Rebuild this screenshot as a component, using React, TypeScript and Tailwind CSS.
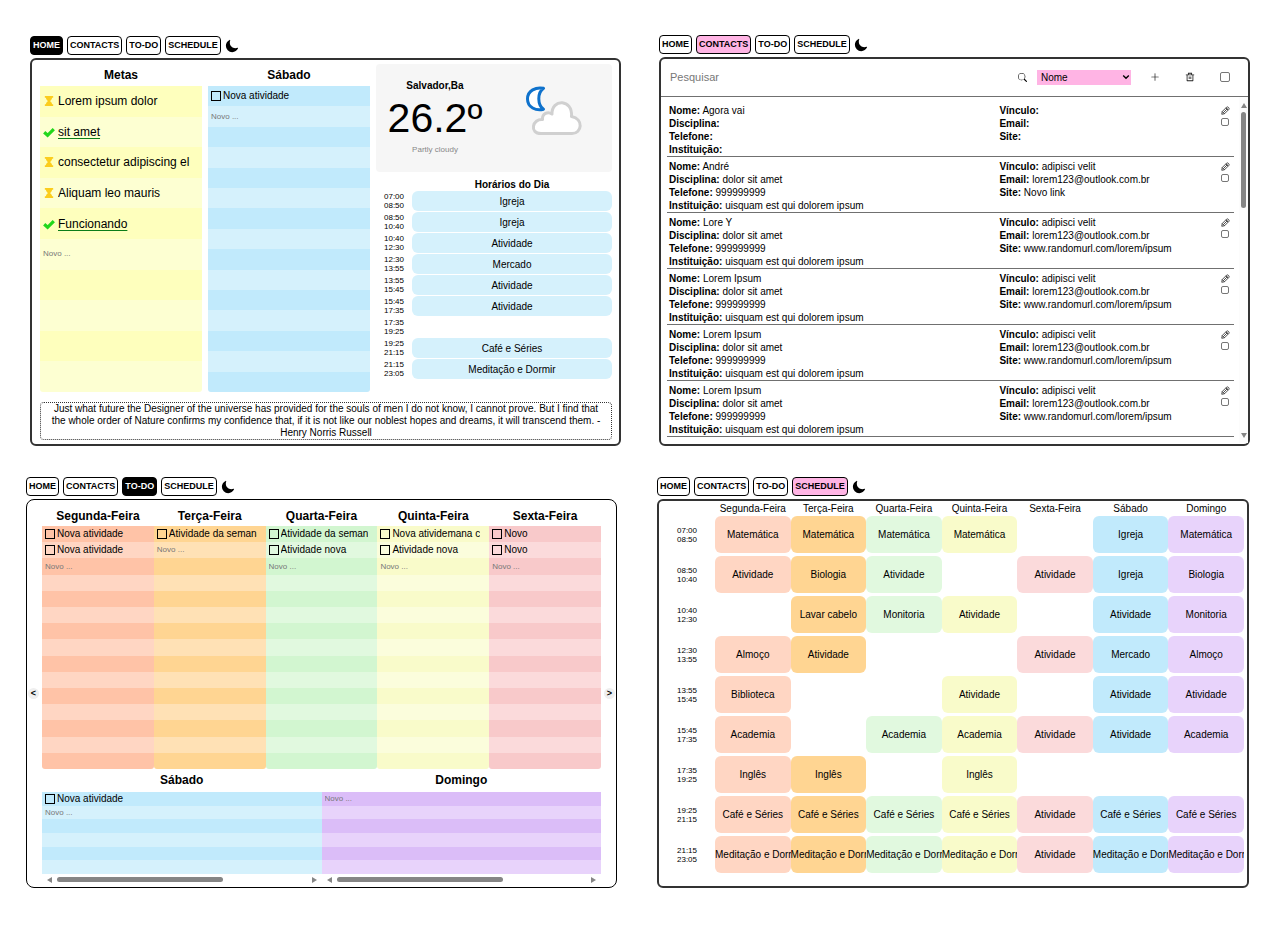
import type { ReactNode } from "react";
import { IoMoon } from "react-icons/io5";
import { BsSearch, BsPlusLg } from "react-icons/bs";
import { RiDeleteBinLine } from "react-icons/ri";

type Tint = { strong: string; soft: string };

const tints: Record<string, Tint> = {
  lemon: { strong: "bg-[#feffbd]", soft: "bg-[#fdffd2]" },
  blue: { strong: "bg-[#c1eafc]", soft: "bg-[#d5f1fc]" },
  salmon: { strong: "bg-[#ffc3a7]", soft: "bg-[#ffd6c3]" },
  amber: { strong: "bg-[#ffd592]", soft: "bg-[#ffe1b5]" },
  green: { strong: "bg-[#d2f6d0]", soft: "bg-[#e1f9df]" },
  yellow: { strong: "bg-[#f9fbca]", soft: "bg-[#fbfddc]" },
  pink: { strong: "bg-[#f8c9ca]", soft: "bg-[#fbdadb]" },
  purple: { strong: "bg-[#dbbdf8]", soft: "bg-[#e8d3fb]" },
};

const times = [
  ["07:00", "08:50"],
  ["08:50", "10:40"],
  ["10:40", "12:30"],
  ["12:30", "13:55"],
  ["13:55", "15:45"],
  ["15:45", "17:35"],
  ["17:35", "19:25"],
  ["19:25", "21:15"],
  ["21:15", "23:05"],
];

const pages = ["HOME", "CONTACTS", "TO-DO", "SCHEDULE"];

function Nav({ active, activeClass }: { active: string; activeClass: string }) {
  return (
    <nav className="flex h-[19px] items-center gap-1">
      {pages.map((page) => (
        <button
          key={page}
          type="button"
          className={`h-full rounded-[4px] border border-black px-[2px] pb-px text-[9px] leading-none font-bold ${
            page === active ? activeClass : "bg-white text-black"
          }`}
        >
          {page}
        </button>
      ))}
      <button type="button" aria-label="Tema">
        <IoMoon className="size-[14px]" />
      </button>
    </nav>
  );
}

function Screen(props: { active: string; activeClass: string; className: string; frameClass: string; children: ReactNode }) {
  return (
    <section className={`flex min-w-0 flex-col gap-[3px] ${props.className}`}>
      <Nav active={props.active} activeClass={props.activeClass} />
      <div className={`flex-1 bg-white ${props.frameClass}`}>{props.children}</div>
    </section>
  );
}

function TaskList(props: { name: string; tint: Tint; rows: number; items: string[]; className: string }) {
  const { name, tint, rows, items } = props;
  return (
    <ul className={`flex flex-col overflow-hidden ${props.className}`}>
      {Array.from({ length: rows }, (_, i) => (
        <li key={i} className={`flex min-h-0 flex-1 items-center gap-[2px] pr-[9px] pl-[3px] ${i % 2 ? tint.soft : tint.strong}`}>
          {i < items.length && (
            <>
              <input
                type="checkbox"
                aria-label={`Concluir ${items[i]}`}
                className="size-[10px] shrink-0 appearance-none border border-black"
              />
              <input
                type="text"
                aria-label={`${name}, tarefa ${i + 1}`}
                defaultValue={items[i]}
                className="w-full min-w-0 text-[10px] leading-[12px]"
              />
            </>
          )}
          {i === items.length && (
            <input
              type="text"
              aria-label={`${name}, nova tarefa`}
              placeholder="Novo ..."
              className="w-full min-w-0 text-[8px] leading-[12px] placeholder:text-[#777]"
            />
          )}
        </li>
      ))}
    </ul>
  );
}

function Hourglass() {
  return (
    <svg viewBox="0 0 12 12" className="size-[10px] shrink-0 fill-[#fbcd1d]" aria-hidden="true">
      <path d="M1 0h10v2H9.800C9.500 4 8.200 5 7.300 6 8.200 7 9.500 8 9.800 10H11v2H1v-2h1.200C2.500 8 3.800 7 4.700 6 3.800 5 2.500 4 2.200 2H1z" />
    </svg>
  );
}

function Check() {
  return (
    <svg viewBox="0 0 12 12" className="size-[12px] shrink-0" aria-hidden="true">
      <path d="M1.200 6.200 4.600 9.300 10.800 3.200" fill="none" stroke="#22d71c" strokeWidth="3.200" />
    </svg>
  );
}

const goals = [
  { text: "Lorem ipsum dolor", done: false },
  { text: "sit amet", done: true },
  { text: "consectetur adipiscing el", done: false },
  { text: "Aliquam leo mauris", done: false },
  { text: "Funcionando", done: true },
];

function Goals() {
  return (
    <ul className="flex flex-1 flex-col overflow-hidden rounded-b-[3px]">
      {Array.from({ length: 10 }, (_, i) => {
        const goal = goals[i];
        return (
          <li
            key={i}
            className={`flex flex-1 items-center gap-[3px] pr-1 pl-[3px] ${i % 2 ? tints.lemon.soft : tints.lemon.strong}`}
          >
            {goal && (
              <>
                <span className="flex w-[12px] shrink-0 justify-center">{goal.done ? <Check /> : <Hourglass />}</span>
                <input
                  type="text"
                  aria-label={`Meta ${i + 1}`}
                  defaultValue={goal.text}
                  className={`w-full min-w-0 text-[12px] leading-[16px] ${
                    goal.done ? "underline decoration-[#0b7d18] underline-offset-2" : ""
                  }`}
                />
              </>
            )}
            {i === goals.length && (
              <input
                type="text"
                aria-label="Nova meta"
                placeholder="Novo ..."
                className="w-full min-w-0 text-[8px] leading-[12px] placeholder:text-[#777]"
              />
            )}
          </li>
        );
      })}
    </ul>
  );
}

const today = ["Igreja", "Igreja", "Atividade", "Mercado", "Atividade", "Atividade", "", "Café e Séries", "Meditação e Dormir"];

function Weather() {
  return (
    <div className="flex h-[108px] items-center rounded-[4px] bg-[#f6f6f6]">
      <div className="flex w-1/2 flex-col items-center">
        <h3 className="text-[10px] leading-[12px] font-bold">Salvador,Ba</h3>
        <p className="text-[41px] leading-[52px]">26.2º</p>
        <p className="text-[8px] leading-[12px] text-[#888]">Partly cloudy</p>
      </div>
      <div className="flex w-1/2 justify-center">
        <svg viewBox="0 0 58 50" className="mb-[14px] h-[50px] w-[58px]" aria-label="Parcialmente nublado" role="img">
          <path
            d="M19.500 2.300C12 .8 3.500 4.500 3.500 13c0 8.500 8.500 12 16 10.200C13.500 19 13 7 19.500 2.300z"
            fill="#fff"
            stroke="#0f72cc"
            strokeWidth="3"
            strokeLinejoin="round"
          />
          <path
            d="M17 47.500C5 47.500 8.500 32.500 18.500 33.500 18 27.500 24 25 28 28 27.500 12.500 49 12.500 47.500 30.500 60 33 58 47.500 48 47.500z"
            fill="#fff"
            stroke="#d0d0d0"
            strokeWidth="3"
            strokeLinejoin="round"
          />
        </svg>
      </div>
    </div>
  );
}

function HomeScreen() {
  return (
    <Screen
      active="HOME"
      activeClass="bg-black text-white"
      className="pt-[36px] pr-[19px] pl-[30px]"
      frameClass="rounded-[6px] border-2 border-[#333]"
    >
      <div className="flex flex-col gap-[10px] pt-1 pr-[7px] pb-1 pl-2">
        <div className="flex gap-[6px]">
          <div className="flex flex-[162] flex-col">
            <h2 className="text-center text-[12px] leading-[22px] font-bold">Metas</h2>
            <Goals />
          </div>
          <div className="flex flex-[162] flex-col">
            <h2 className="text-center text-[12px] leading-[22px] font-bold">Sábado</h2>
            <TaskList name="Sábado" tint={tints.blue} rows={15} items={["Nova atividade"]} className="flex-1 rounded-b-[3px]" />
          </div>
          <div className="flex flex-[236] flex-col pb-[13px]">
            <Weather />
            <h2 className="pt-[6px] pl-[36px] text-center text-[10px] leading-[13px] font-bold">Horários do Dia</h2>
            <ul className="flex flex-col gap-px">
              {times.map(([start, end], i) => (
                <li key={start} className="flex h-[20px] items-center">
                  <span className="w-[36px] text-center text-[8px] leading-[9px]">
                    {start}
                    <br />
                    {end}
                  </span>
                  {today[i] && (
                    <span className="flex h-full flex-1 items-center justify-center rounded-[6px] bg-[#d5f1fc] text-[10px]">
                      {today[i]}
                    </span>
                  )}
                </li>
              ))}
            </ul>
          </div>
        </div>
        <blockquote className="rounded-[4px] border border-dotted border-[#333] px-[6px] text-center text-[10px] leading-[12px]">
          Just what future the Designer of the universe has provided for the souls of men I do not know, I cannot prove. But I find that
          the whole order of Nature confirms my confidence that, if it is not like our noblest hopes and dreams, it will transcend them. -
          Henry Norris Russell
        </blockquote>
      </div>
    </Screen>
  );
}

type Contact = { name: string; subject: string; phone: string; school: string; bond: string; email: string; site: string };

const known = {
  subject: "dolor sit amet",
  phone: "999999999",
  school: "uisquam est qui dolorem ipsum",
  bond: "adipisci velit",
  email: "lorem123@outlook.com.br",
  site: "www.randomurl.com/lorem/ipsum",
};

const contacts: Contact[] = [
  { name: "Agora vai", subject: "", phone: "", school: "", bond: "", email: "", site: "" },
  { ...known, name: "André", site: "Novo link" },
  { ...known, name: "Lore Y" },
  { ...known, name: "Lorem Ipsum" },
  { ...known, name: "Lorem Ipsum" },
  { ...known, name: "Lorem Ipsum" },
];

function Field({ label, value }: { label: string; value: string }) {
  return (
    <p>
      <b>{label}:</b> {value}
    </p>
  );
}

function Pencil() {
  return (
    <svg viewBox="0 0 18 18" className="size-[9px]" fill="none" stroke="#222" strokeWidth="1.600" strokeLinejoin="round" aria-hidden="true">
      <path d="M1.500 16.500 2.500 11 11.500 2C13.500.500 17.500 4.500 16 6.500L7 15.500z" />
      <path d="M4.800 13.200 13 5M9.800 3.800l4.400 4.400M2.500 11 7 15.500" />
    </svg>
  );
}

const smallBox = "appearance-none rounded-[2px] border border-[#767676] bg-white";

function ContactsScreen() {
  return (
    <Screen
      active="CONTACTS"
      activeClass="bg-[#ffb4e4] text-black"
      className="pt-[35px] pr-[30px] pl-[19px]"
      frameClass="rounded-[6px] border-2 border-[#333]"
    >
      <div className="flex h-[38px] items-center border-b border-[#707070] pr-[18px] pb-px pl-[9px]">
        <input
          type="search"
          aria-label="Pesquisar"
          placeholder="Pesquisar"
          className="min-w-0 flex-1 text-[11px] leading-[16px] placeholder:text-[#777]"
        />
        <button type="button" aria-label="Buscar">
          <BsSearch className="size-[9px]" />
        </button>
        <div className="relative ml-[10px] flex items-center">
          <select aria-label="Campo" className="h-[15px] w-[94px] appearance-none bg-[#ffb4e4] px-1 text-[10px] leading-[15px]">
            <option>Nome</option>
          </select>
          <svg viewBox="0 0 8 6" className="pointer-events-none absolute right-[1px] h-[6px] w-[8px]" aria-hidden="true">
            <path d="M1.200 1.500 4 4.300 6.800 1.500" fill="none" stroke="#000" strokeWidth="1.400" />
          </svg>
        </div>
        <button type="button" aria-label="Adicionar" className="ml-[19px]">
          <BsPlusLg className="size-[10px]" />
        </button>
        <button type="button" aria-label="Excluir" className="ml-[25px]">
          <RiDeleteBinLine className="size-[10px] text-[#222]" />
        </button>
        <input type="checkbox" aria-label="Selecionar todos" className={`ml-[25px] size-[10px] ${smallBox}`} />
      </div>
      <div className="flex h-[346px]">
        <ul className="min-w-0 flex-1 overflow-hidden pt-[4px] pr-[5px] pl-[6px] text-[10px] leading-[13px]">
          {contacts.map((c, i) => (
            <li key={i} className="flex border-b border-[#707070] pt-[3px] pl-[2px]">
              <div className="min-w-0 flex-[331]">
                <Field label="Nome" value={c.name} />
                <Field label="Disciplina" value={c.subject} />
                <Field label="Telefone" value={c.phone} />
                <Field label="Instituição" value={c.school} />
              </div>
              <div className="min-w-0 flex-[217]">
                <Field label="Vínculo" value={c.bond} />
                <Field label="Email" value={c.email} />
                <Field label="Site" value={c.site} />
              </div>
              <div className="flex w-[18px] flex-col items-center gap-[3px] pt-[2px]">
                <button type="button" aria-label={`Editar ${c.name}`} className="flex">
                  <Pencil />
                </button>
                <input type="checkbox" aria-label={`Selecionar ${c.name}`} className={`size-[8px] ${smallBox}`} />
              </div>
            </li>
          ))}
        </ul>
        <div className="flex w-[9px] flex-col items-center gap-[4px] bg-[#fcfcfc] pt-[6px] pb-[5px]" aria-hidden="true">
          <svg viewBox="0 0 6 5" className="h-[5px] w-[6px] fill-[#858585]">
            <path d="M3 0 6 5H0z" />
          </svg>
          <span className="h-[96px] w-[5px] rounded-full bg-[#858585]" />
          <svg viewBox="0 0 6 5" className="mt-auto h-[5px] w-[6px] fill-[#858585]">
            <path d="M3 5 6 0H0z" />
          </svg>
        </div>
      </div>
    </Screen>
  );
}

const weekdays = [
  { day: "Segunda-Feira", tint: tints.salmon, items: ["Nova atividade", "Nova atividade"] },
  { day: "Terça-Feira", tint: tints.amber, items: ["Atividade da semana"] },
  { day: "Quarta-Feira", tint: tints.green, items: ["Atividade da semana", "Atividade nova"] },
  { day: "Quinta-Feira", tint: tints.yellow, items: ["Nova atividemana c", "Atividade nova"] },
  { day: "Sexta-Feira", tint: tints.pink, items: ["Novo", "Novo"] },
];

const weekend = [
  { day: "Sábado", tint: tints.blue, items: ["Nova atividade"] },
  { day: "Domingo", tint: tints.purple, items: [] as string[] },
];

function HorizontalScroll() {
  return (
    <div className="flex h-[11px] items-center gap-[5px] px-[5px]" aria-hidden="true">
      <svg viewBox="0 0 5 6" className="h-[6px] w-[5px] fill-[#858585]">
        <path d="M0 3 5 0v6z" />
      </svg>
      <span className="flex flex-1">
        <span className="h-[5px] w-2/3 rounded-full bg-[#858585]" />
      </span>
      <svg viewBox="0 0 5 6" className="h-[6px] w-[5px] fill-[#858585]">
        <path d="M5 3 0 0v6z" />
      </svg>
    </div>
  );
}

function Arrow({ label, className, children }: { label: string; className: string; children: string }) {
  return (
    <button
      type="button"
      aria-label={label}
      className={`flex size-[11px] shrink-0 items-center justify-center self-center rounded-full bg-[#efefef] text-[9px] leading-none font-bold ${className}`}
    >
      {children}
    </button>
  );
}

function TodoScreen() {
  return (
    <Screen
      active="TO-DO"
      activeClass="bg-black text-white"
      className="pt-[31px] pr-[23px] pl-[26px]"
      frameClass="rounded-[8px] border border-black"
    >
      <div className="flex">
        <Arrow label="Anterior" className="mr-[3px] ml-px">
          {"<"}
        </Arrow>
        <div className="min-w-0 flex-1 pt-[6px] pb-[2px]">
          <div className="grid grid-cols-5">
            {weekdays.map((d) => (
              <div key={d.day}>
                <h2 className="text-center text-[12px] leading-[20px] font-bold">{d.day}</h2>
                <TaskList name={d.day} tint={d.tint} rows={15} items={d.items} className="h-[243px] rounded-b-[3px]" />
              </div>
            ))}
          </div>
          <div className="grid grid-cols-2">
            {weekend.map((d) => (
              <div key={d.day}>
                <h2 className="text-center text-[12px] leading-[23px] font-bold">{d.day}</h2>
                <TaskList name={d.day} tint={d.tint} rows={6} items={d.items} className="h-[82px]" />
                <HorizontalScroll />
              </div>
            ))}
          </div>
        </div>
        <Arrow label="Próximo" className="mr-px ml-[3px]">
          {">"}
        </Arrow>
      </div>
    </Screen>
  );
}

const days = [
  { name: "Segunda-Feira", bg: "bg-[#ffd6c3]" },
  { name: "Terça-Feira", bg: "bg-[#ffd592]" },
  { name: "Quarta-Feira", bg: "bg-[#e1f9df]" },
  { name: "Quinta-Feira", bg: "bg-[#f9fbca]" },
  { name: "Sexta-Feira", bg: "bg-[#fbdadb]" },
  { name: "Sábado", bg: "bg-[#c1eafc]" },
  { name: "Domingo", bg: "bg-[#e8d3fb]" },
];

const week = [
  ["Matemática", "Matemática", "Matemática", "Matemática", "", "Igreja", "Matemática"],
  ["Atividade", "Biologia", "Atividade", "", "Atividade", "Igreja", "Biologia"],
  ["", "Lavar cabelo", "Monitoria", "Atividade", "", "Atividade", "Monitoria"],
  ["Almoço", "Atividade", "", "", "Atividade", "Mercado", "Almoço"],
  ["Biblioteca", "", "", "Atividade", "", "Atividade", "Atividade"],
  ["Academia", "", "Academia", "Academia", "Atividade", "Atividade", "Academia"],
  ["Inglês", "Inglês", "", "Inglês", "", "", ""],
  ["Café e Séries", "Café e Séries", "Café e Séries", "Café e Séries", "Atividade", "Café e Séries", "Café e Séries"],
  [
    "Meditação e Dormir",
    "Meditação e Dormir",
    "Meditação e Dormir",
    "Meditação e Dormir",
    "Atividade",
    "Meditação e Dormir",
    "Meditação e Dormir",
  ],
];

function ScheduleScreen() {
  return (
    <Screen
      active="SCHEDULE"
      activeClass="bg-[#ffb4e4] text-black"
      className="pt-[31px] pr-[31px] pl-[17px]"
      frameClass="rounded-[6px] border-2 border-[#333]"
    >
      <div className="pt-px pr-[3px] pb-[10px]">
        <table className="w-full table-fixed border-collapse text-[10px]">
          <thead>
            <tr className="h-[14px] leading-[14px]">
              <th className="w-[56px] p-0">
                <span className="sr-only">Horário</span>
              </th>
              {days.map((d) => (
                <th key={d.name} scope="col" className="p-0 font-normal whitespace-nowrap">
                  {d.name}
                </th>
              ))}
            </tr>
          </thead>
          <tbody>
            {week.map((row, r) => (
              <tr key={r} className="h-[40px]">
                <th scope="row" className="p-0 pb-[3px] text-[8px] leading-[9px] font-normal">
                  {times[r][0]}
                  <br />
                  {times[r][1]}
                </th>
                {row.map((text, c) => (
                  <td key={c} className="px-0 pt-0 pb-[3px]">
                    {text && (
                      <div className={`overflow-hidden rounded-[6px] text-center leading-[37px] whitespace-nowrap ${days[c].bg}`}>{text}</div>
                    )}
                  </td>
                ))}
              </tr>
            ))}
          </tbody>
        </table>
      </div>
    </Screen>
  );
}

export default function App() {
  return (
    <main className="grid min-h-screen grid-cols-2 content-start bg-white font-['Liberation_Sans',Arial,sans-serif] text-black">
      <HomeScreen />
      <ContactsScreen />
      <TodoScreen />
      <ScheduleScreen />
    </main>
  );
}
